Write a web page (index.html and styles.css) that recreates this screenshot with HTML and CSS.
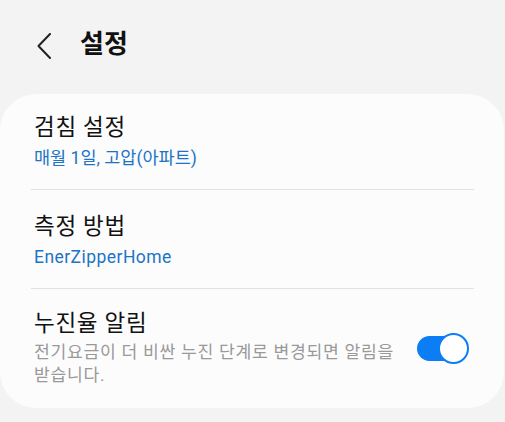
FILE: index.html
```html
<!DOCTYPE html>
<html lang="ko">
<head>
<meta charset="utf-8">
<title>설정</title>
<link rel="stylesheet" href="styles.css">
</head>
<body>
<header class="header">
  <svg class="back" width="14" height="26" viewBox="0 0 14 26" aria-hidden="true">
    <polyline points="13,1 1.5,13 13,25" fill="none" stroke="#222" stroke-width="2" stroke-linecap="round" stroke-linejoin="round"/>
  </svg>
  <h1 class="title">설정</h1>
</header>
<main class="card">
  <div class="item first">
    <div class="item-text">
      <div class="item-title">검침 설정</div>
      <div class="item-sub">매월 1일, 고압(아파트)</div>
    </div>
  </div>
  <div class="divider"></div>
  <div class="item">
    <div class="item-text">
      <div class="item-title">측정 방법</div>
      <div class="item-sub latin">EnerZipperHome</div>
    </div>
  </div>
  <div class="divider"></div>
  <div class="item last">
    <div class="item-text">
      <div class="item-title">누진율 알림</div>
      <div class="item-desc">전기요금이 더 비싼 누진 단계로 변경되면 알림을 받습니다.</div>
    </div>
    <div class="switch">
      <span class="track"></span>
      <span class="thumb"></span>
    </div>
  </div>
</main>
</body>
</html>
```
FILE: styles.css
```css
html, body {
  margin: 0;
  padding: 0;
}
body {
  background: #f3f3f3;
  font-family: Roboto, "Noto Sans CJK KR", sans-serif;
  color: #111;
  width: 505px;
  height: 422px;
  overflow: hidden;
}
.header {
  display: flex;
  align-items: flex-start;
  padding: 27px 0 0 37px;
  height: 34px;
}
.back {
  display: block;
  margin-top: 6px;
  margin-right: 29px;
}
.title {
  margin: 0;
  font-size: 26px;
  line-height: 34px;
  font-weight: 700;
  color: #111;
}
.card {
  margin: 33px 1px 0 0;
  background: #fcfcfc;
  border-radius: 36px;
  padding: 0 30px 0 31px;
}
.item {
  display: flex;
  align-items: center;
  padding: 22px 5px 19px 3px;
}
.item.first {
  padding-top: 19px;
}
.item.last {
  padding-top: 20px;
  padding-bottom: 21px;
}
.item-text {
  flex: 1;
  min-width: 0;
}
.item-title {
  font-size: 22.5px;
  line-height: 28px;
  letter-spacing: 0.7px;
  color: #111;
}
.item-sub {
  margin-top: 5px;
  font-size: 17.5px;
  line-height: 24px;
  color: #1d74c4;
}
.item-sub.latin {
  letter-spacing: 0.45px;
}
.item-desc {
  margin-top: 4px;
  padding-right: 20px;
  font-size: 17.2px;
  line-height: 23px;
  letter-spacing: 0.7px;
  color: #999;
}
.divider {
  height: 1px;
  background: #e1e1e1;
}
.switch {
  position: relative;
  flex: none;
  width: 52px;
  height: 31px;
}
.track {
  position: absolute;
  left: 0;
  top: 3px;
  width: 48px;
  height: 25px;
  border-radius: 13px;
  background: #0b7ef6;
}
.thumb {
  position: absolute;
  right: 0;
  top: 0;
  width: 31px;
  height: 31px;
  box-sizing: border-box;
  border-radius: 50%;
  border: 2px solid #0b7ef6;
  background: #fff;
}
```
